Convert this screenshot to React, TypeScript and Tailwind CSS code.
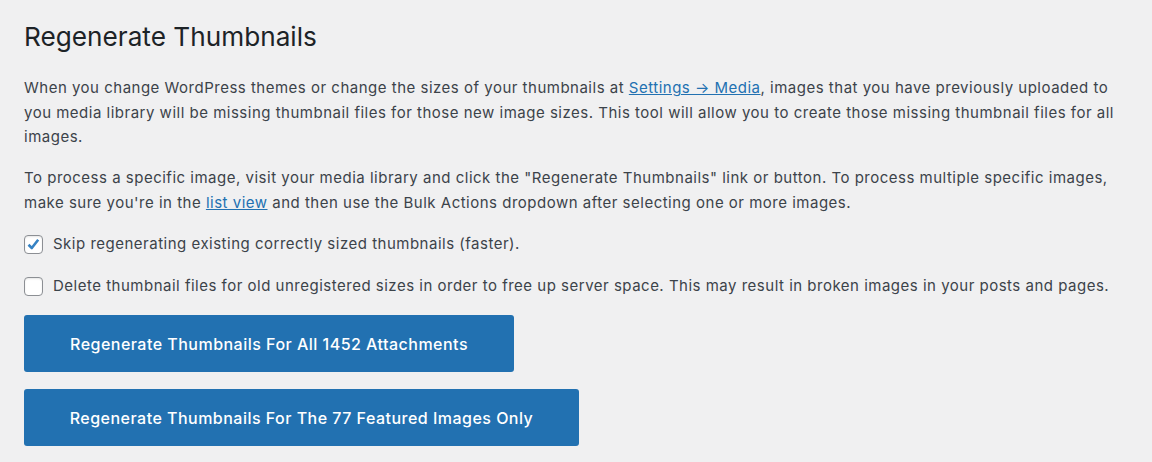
import React from "react";

function Checkbox({ checked }: { checked: boolean }) {
  return (
    <span className="relative flex h-[19px] w-[19px] shrink-0 items-center justify-center rounded-[4px] border border-[#8c8f94] bg-white shadow-[inset_0_1px_2px_rgba(0,0,0,0.1)]">
      {checked && (
        <svg viewBox="0 0 17 17" className="h-[17px] w-[17px]" fill="none">
          <polyline points="3.5,8.8 6.8,12 13.2,3.8" stroke="#3582c4" strokeWidth="2.6" strokeLinejoin="round" />
        </svg>
      )}
    </span>
  );
}

export default function App() {
  return (
    <div
      className="min-h-[462px] bg-[#f0f0f1] px-6 pt-[19px] text-[#3c434a]"
      style={{ fontFamily: "Inter, 'Noto Sans', sans-serif" }}
    >
      <h1 className="text-[26.2px] font-normal leading-[36px] text-[#1d2327]">Regenerate Thumbnails</h1>
      <p className="mt-[21px] text-[15px] leading-[24.5px] tracking-[0.5px]">
        When you change WordPress themes or change the sizes of your thumbnails at{" "}
        <a className="text-[#2271b1] underline" href="#">
          Settings → Media
        </a>
        , images that you have previously uploaded to
        <br />
        you media library will be missing thumbnail files for those new image sizes. This tool will allow you to create those missing thumbnail files for all
        <br />
        images.
      </p>
      <p className="mt-[16.5px] text-[15px] leading-[24.5px] tracking-[0.5px]">
        To process a specific image, visit your media library and click the "Regenerate Thumbnails" link or button. To process multiple specific images,
        <br />
        make sure you're in the{" "}
        <a className="text-[#2271b1] underline" href="#">
          list view
        </a>{" "}
        and then use the Bulk Actions dropdown after selecting one or more images.
      </p>
      <label className="mt-[17px] flex h-6 items-center gap-[10px] text-[15px] tracking-[0.5px]">
        <Checkbox checked />
        <span>Skip regenerating existing correctly sized thumbnails (faster).</span>
      </label>
      <label className="mt-[18px] flex h-6 items-center gap-[10px] text-[15px] tracking-[0.5px]">
        <Checkbox checked={false} />
        <span>Delete thumbnail files for old unregistered sizes in order to free up server space. This may result in broken images in your posts and pages.</span>
      </label>
      <div className="mt-[17px] flex flex-col items-start gap-[17px]">
        <button className="h-[57px] w-[490px] rounded-[3px] bg-[#2271b1] text-[16px] font-medium tracking-[0.48px] text-white">
          Regenerate Thumbnails For All 1452 Attachments
        </button>
        <button className="h-[57px] w-[555px] rounded-[3px] bg-[#2271b1] text-[16px] font-medium tracking-[0.48px] text-white">
          Regenerate Thumbnails For The 77 Featured Images Only
        </button>
      </div>
    </div>
  );
}
